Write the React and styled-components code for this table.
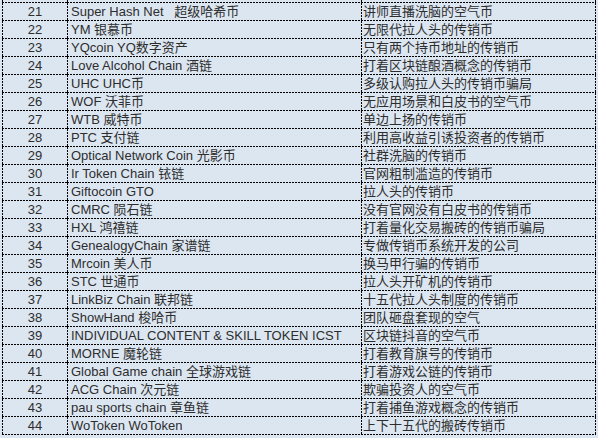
import React from "react";
import styled, { createGlobalStyle } from "styled-components";

const Global = createGlobalStyle`
  html, body { margin: 0; padding: 0; background: #dce6f1; }
  body { font-family: "Liberation Sans", "Noto Sans CJK SC", sans-serif; }
`;

const rows = [
  [21, "Super Hash Net   超级哈希币", "讲师直播洗脑的空气币"],
  [22, "YM 银慕币", "无限代拉人头的传销币"],
  [23, "YQcoin YQ数字资产", "只有两个持币地址的传销币"],
  [24, "Love Alcohol Chain 酒链", "打着区块链酿酒概念的传销币"],
  [25, "UHC UHC币", "多级认购拉人头的传销币骗局"],
  [26, "WOF 沃菲币", "无应用场景和白皮书的空气币"],
  [27, "WTB 威特币", "单边上扬的传销币"],
  [28, "PTC 支付链", "利用高收益引诱投资者的传销币"],
  [29, "Optical Network Coin 光影币", "社群洗脑的传销币"],
  [30, "Ir Token Chain 铱链", "官网粗制滥造的传销币"],
  [31, "Giftocoin GTO", "拉人头的传销币"],
  [32, "CMRC 陨石链", "没有官网没有白皮书的传销币"],
  [33, "HXL 鸿禧链", "打着量化交易搬砖的传销币骗局"],
  [34, "GenealogyChain 家谱链", "专做传销币系统开发的公司"],
  [35, "Mrcoin 美人币", "换马甲行骗的传销币"],
  [36, "STC 世通币", "拉人头开矿机的传销币"],
  [37, "LinkBiz Chain 联邦链", "十五代拉人头制度的传销币"],
  [38, "ShowHand 梭哈币", "团队砸盘套现的空气"],
  [39, "INDIVIDUAL CONTENT & SKILL TOKEN ICST", "区块链抖音的空气币"],
  [40, "MORNE 魔轮链", "打着教育旗号的传销币"],
  [41, "Global Game chain 全球游戏链", "打着游戏公链的传销币"],
  [42, "ACG Chain 次元链", "欺骗投资人的空气币"],
  [43, "pau sports chain 章鱼链", "打着捕鱼游戏概念的传销币"],
  [44, "WoToken WoToken", "上下十五代的搬砖传销币"],
];

const Sheet = styled.div`
  display: grid;
  grid-template-columns: 65px 294px 235px;
  padding-left: 2px;
  width: 594px;
`;

const hLine = "repeating-linear-gradient(to right, #000 0 2px, transparent 2px 3px)";
const vLine = "repeating-linear-gradient(to bottom, #000 0 2px, transparent 2px 3px)";

const Cell = styled.div`
  box-sizing: border-box;
  height: ${(p) => (p.$band ? 3 : 18)}px;
  padding: 0 ${(p) => (p.$last ? 2 : 0)}px 1px ${(p) => p.$pad}px;
  font-size: 13px;
  line-height: 17px;
  color: #2d2d2d;
  white-space: pre;
  overflow: hidden;
  text-align: ${(p) => (p.$center ? "center" : "left")};
  background-image: ${hLine}, ${vLine}${(p) => (p.$last ? `, ${vLine}` : "")};
  background-repeat: no-repeat;
  background-size: 100% 1px, 1px 100%${(p) => (p.$last ? ", 1px 100%" : "")};
  background-position: left bottom, left top${(p) => (p.$last ? ", right top" : "")};
`;

export default function App() {
  return (
    <>
      <Global />
      <Sheet>
        <Cell $band $pad={1} />
        <Cell $band $pad={4} />
        <Cell $band $last $pad={2} />
        {rows.map(([n, name, desc]) => (
          <React.Fragment key={n}>
            <Cell $center $pad={1}>{n}</Cell>
            <Cell $pad={4}>{name}</Cell>
            <Cell $last $pad={2}>{desc}</Cell>
          </React.Fragment>
        ))}
      </Sheet>
    </>
  );
}
